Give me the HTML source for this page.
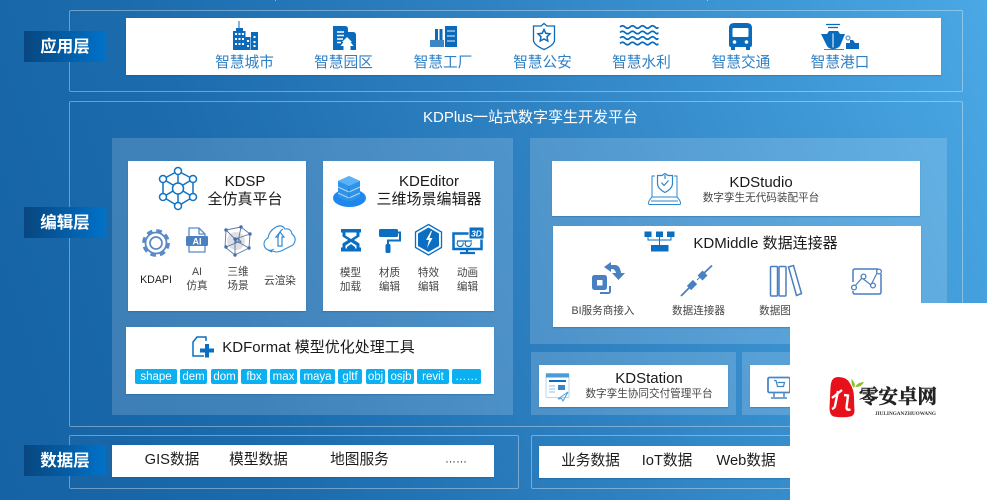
<!DOCTYPE html>
<html lang="zh">
<head>
<meta charset="utf-8">
<title>KDPlus</title>
<style>
html,body{margin:0;padding:0;width:987px;height:500px;overflow:hidden}
body{position:relative;background:linear-gradient(72deg,#1562a4 0%,#1b6bad 25%,#2f82c2 56%,#4aa8e4 100%);font-family:"Liberation Sans","Noto Sans CJK SC",sans-serif;color:#1a1a1a}
.b{position:absolute;box-sizing:border-box}
.f{border:1.5px solid rgba(255,255,255,.36);border-radius:2px}
.w{background:#fff;box-shadow:0 1px 1px rgba(20,80,140,.35)}
.p{background:rgba(255,255,255,.16)}
.l{background:linear-gradient(90deg,#08467f,#0072c9);color:#fff;font-weight:700;font-size:16.5px;line-height:33px;text-align:center}
.c{position:absolute;transform:translate(-50%,-50%);white-space:nowrap;line-height:1.2;margin-top:1.5px}
.a{color:#2f7fc4;font-size:14.7px}
.h{font-size:15px;color:#1a1a1a}
.s{font-size:10.6px;color:#444;text-align:center;line-height:14px;margin-top:1px}
.d{font-size:14.7px;color:#1c1c1c}
.pill{position:absolute;top:369px;height:15px;background:#0bb0f0;border-radius:2px;color:#fff;font-size:11.5px;line-height:16px;text-align:center}
svg{position:absolute;left:0;top:0}
</style>
</head>
<body>
<div class="b f" style="left:69px;top:10px;width:894px;height:82px"></div>
<div class="b f" style="left:69px;top:101px;width:894px;height:326px"></div>
<div class="b f" style="left:69px;top:435px;width:450px;height:54px"></div>
<div class="b f" style="left:531px;top:435px;width:432px;height:54px"></div>

<div class="b w" style="left:126px;top:18px;width:815px;height:57px"></div>
<div class="b l" style="left:24px;top:31px;width:82px;height:31px">应用层</div>
<div class="b l" style="left:24px;top:207px;width:82px;height:31px">编辑层</div>
<div class="b l" style="left:24px;top:445px;width:82px;height:31px">数据层</div>

<div class="c a" style="left:244.5px;top:62px">智慧城市</div>
<div class="c a" style="left:343.5px;top:62px">智慧园区</div>
<div class="c a" style="left:443px;top:62px">智慧工厂</div>
<div class="c a" style="left:542.5px;top:62px">智慧公安</div>
<div class="c a" style="left:641.5px;top:62px">智慧水利</div>
<div class="c a" style="left:741px;top:62px">智慧交通</div>
<div class="c a" style="left:840px;top:62px">智慧港口</div>

<div class="c" style="left:530.5px;top:116.5px;color:#fff;font-size:15px">KDPlus一站式数字孪生开发平台</div>

<div class="b p" style="left:112px;top:138px;width:401px;height:277px"></div>
<div class="b p" style="left:530px;top:138px;width:417px;height:206px"></div>
<div class="b p" style="left:531px;top:352px;width:205px;height:63px"></div>
<div class="b p" style="left:742px;top:352px;width:205px;height:63px"></div>

<div class="b w" style="left:128px;top:161px;width:178px;height:150px"></div>
<div class="b w" style="left:323px;top:161px;width:171px;height:150px"></div>
<div class="b w" style="left:126px;top:327px;width:368px;height:67px"></div>
<div class="b w" style="left:552px;top:161px;width:368px;height:55px"></div>
<div class="b w" style="left:553px;top:226px;width:368px;height:101px"></div>
<div class="b w" style="left:539px;top:365px;width:189px;height:42px"></div>
<div class="b w" style="left:750px;top:365px;width:189px;height:42px"></div>
<div class="b w" style="left:112px;top:445px;width:382px;height:32px"></div>
<div class="b w" style="left:539px;top:446px;width:400px;height:32px"></div>

<div class="c h" style="left:245px;top:180px">KDSP</div>
<div class="c h" style="left:245px;top:198px">全仿真平台</div>
<div class="c s" style="left:156px;top:279px;color:#222">KDAPI</div>
<div class="c s" style="left:197px;top:278px">AI<br>仿真</div>
<div class="c s" style="left:238px;top:278px">三维<br>场景</div>
<div class="c s" style="left:280px;top:280px">云渲染</div>

<div class="c h" style="left:429px;top:180px">KDEditor</div>
<div class="c h" style="left:429px;top:198px">三维场景编辑器</div>
<div class="c s" style="left:350.5px;top:278.5px">模型<br>加载</div>
<div class="c s" style="left:389.5px;top:278.5px">材质<br>编辑</div>
<div class="c s" style="left:428.5px;top:278.5px">特效<br>编辑</div>
<div class="c s" style="left:467.5px;top:278.5px">动画<br>编辑</div>

<div class="c h" style="left:318.5px;top:346.5px">KDFormat 模型优化处理工具</div>
<div class="pill" style="left:135px;width:42px">shape</div>
<div class="pill" style="left:180px;width:27px">dem</div>
<div class="pill" style="left:211px;width:27px">dom</div>
<div class="pill" style="left:241px;width:26px">fbx</div>
<div class="pill" style="left:270px;width:27px">max</div>
<div class="pill" style="left:300px;width:35px">maya</div>
<div class="pill" style="left:338px;width:24px">gltf</div>
<div class="pill" style="left:366px;width:19px">obj</div>
<div class="pill" style="left:388px;width:26px">osjb</div>
<div class="pill" style="left:417px;width:32px">revit</div>
<div class="pill" style="left:452px;width:29px">……</div>

<div class="c d" style="left:172px;top:459.5px">GIS数据</div>
<div class="c d" style="left:258.5px;top:459.5px">模型数据</div>
<div class="c d" style="left:359.5px;top:459.5px">地图服务</div>
<div class="c d" style="left:456px;top:458px;font-size:11px">……</div>
<div class="c d" style="left:590.5px;top:460.5px">业务数据</div>
<div class="c d" style="left:667px;top:460.5px">IoT数据</div>
<div class="c d" style="left:746px;top:460.5px">Web数据</div>

<div class="c h" style="left:761px;top:181.5px">KDStudio</div>
<div class="c s" style="left:761px;top:197px">数字孪生无代码装配平台</div>
<div class="c h" style="left:765.5px;top:242.5px">KDMiddle 数据连接器</div>
<div class="c s" style="left:603px;top:310px">BI服务商接入</div>
<div class="c s" style="left:698.5px;top:310px">数据连接器</div>
<div class="c s" style="left:775px;top:310px">数据图</div>
<div class="c h" style="left:649px;top:377.5px">KDStation</div>
<div class="c s" style="left:649px;top:393px">数字孪生协同交付管理平台</div>

<svg width="987" height="500" viewBox="0 0 987 500" fill="none">
<rect x="275" y="0" width="1" height="1" fill="#5fd0e0"/><rect x="707" y="0" width="1" height="1" fill="#7fd8f0"/>

<!-- city -->
<path d="M233 50V31h3v-3h2.500v-7h1v7H243v3h2.500v19zM245.500 50V37h5v13zM251 50V32h7v18z" fill="#0a6bbd"/>
<g fill="#fff"><rect x="235" y="33" width="2" height="2"/><rect x="238.500" y="33" width="2" height="2"/><rect x="242" y="33" width="2" height="2"/><rect x="235" y="38" width="2" height="2"/><rect x="238.500" y="38" width="2" height="2"/><rect x="242" y="38" width="2" height="2"/><rect x="235" y="43" width="2" height="2"/><rect x="238.500" y="43" width="2" height="2"/><rect x="242" y="43" width="2" height="2"/><rect x="247" y="40" width="2" height="2"/><rect x="247" y="45" width="2" height="2"/><rect x="253.500" y="36" width="2" height="2"/><rect x="253.500" y="41" width="2" height="2"/><rect x="253.500" y="45" width="2" height="2"/></g>
<!-- park -->
<path d="M333 50V26h12q3 0 3 3v3h5q3 0 3 3v15z" fill="#0a6bbd"/>
<path d="M337 32h7M337 35.500h7M337 39h6M337 42.500h4" stroke="#fff" stroke-width="1.500"/>
<path d="M347 37l5 5h-1.500l3 4h-3v4h-7v-4h-3l3-4h-1.500z" fill="#fff"/>
<!-- factory -->
<rect x="435" y="29" width="3" height="11" fill="#0a6bbd"/><rect x="439.500" y="29" width="3" height="11" fill="#0a6bbd"/>
<path d="M445 26h12v21h-12z" fill="#0a6bbd"/>
<path d="M430 40h14v7h-14z" fill="#3d86c6"/>
<path d="M447 31h8M447 36h8M447 41h8" stroke="#9cc4e6" stroke-width="1.500"/>
<!-- shield -->
<path d="M544 23.500l3 2.500h7.500v14q0 5-10.500 9.500Q533.500 45 533.500 40V26H541z" stroke="#0a6bbd" stroke-width="1.300"/>
<path d="M544 29.500l1.800 3.800 4.200.5-3 3 .8 4.200-3.800-2-3.800 2 .8-4.200-3-3 4.200-.5z" stroke="#0a6bbd" stroke-width="1.500"/>
<!-- water -->
<g stroke="#0a6bbd" stroke-width="1.700">
<path d="M620 27q2.500-2.500 5 0t5 0 5 0 5 0 5 0 5 0 5 0 3 0"/>
<path d="M620 32.500q2.500-2.500 5 0t5 0 5 0 5 0 5 0 5 0 5 0 3 0"/>
<path d="M620 38q2.500-2.500 5 0t5 0 5 0 5 0 5 0 5 0 5 0 3 0"/>
<path d="M620 43.500q2.500-2.500 5 0t5 0 5 0 5 0 5 0 5 0 5 0 3 0"/>
</g>
<!-- bus -->
<path d="M729 28q0-5 5-5h13q5 0 5 5v17q0 2-2 2v3h-4v-3h-11v3h-4v-3q-2 0-2-2z" fill="#0a6bbd"/>
<rect x="732.500" y="28" width="16" height="9" rx="1" fill="#fff"/>
<circle cx="734.500" cy="42" r="1.800" fill="#fff"/><circle cx="746.500" cy="42" r="1.800" fill="#fff"/>
<!-- ship -->
<path d="M826 24.500h14M828 27.500h10" stroke="#0a6bbd" stroke-width="1.300"/>
<path d="M829 31h9l2 3h5l-5 12q-3 3-7 3t-6-3l-6-12h6z" fill="#0a6bbd"/>
<path d="M833 33.500v14" stroke="#fff" stroke-width="1"/>
<path d="M846 48v-5h4v-3h3l2 3h4v6h-13z" fill="#0a6bbd"/>
<circle cx="848" cy="38" r="2" stroke="#3d86c6" stroke-width="1"/>
<path d="M824 49.500h20" stroke="#3d86c6" stroke-width="1"/>

<!-- KDSP graph -->
<g stroke="#0f72c4" stroke-width="1.500" fill="#fff">
<path d="M178 171v35M163 179l30 18M193 179l-30 18M163 179v18M193 179v18M178 171l-15 8M178 171l15 8M178 206l-15-9M178 206l15-9"/>
<circle cx="178" cy="188.500" r="5.500"/>
<circle cx="178" cy="171" r="3.500"/><circle cx="163" cy="179" r="3.500"/><circle cx="193" cy="179" r="3.500"/><circle cx="163" cy="197" r="3.500"/><circle cx="193" cy="197" r="3.500"/><circle cx="178" cy="206" r="3.500"/>
</g>
<!-- gear -->
<g stroke="#5a8ac6">
<circle cx="156" cy="243" r="10.500" stroke-width="1.800"/>
<circle cx="156" cy="243" r="12.300" stroke-width="3.200" stroke-dasharray="5.600 4.050"/>
<circle cx="156" cy="243" r="6" stroke-width="1.700"/>
</g>
<!-- AI doc -->
<path d="M189 237v-9h10l6 6v3M189 246v6h16v-6M199 228v6h6" stroke="#5a8ac6" stroke-width="1.300"/>
<rect x="186" y="236" width="22" height="10" rx="1.500" fill="#4a7fc1"/>
<text x="197" y="244.300" text-anchor="middle" fill="#fff" font-size="9" font-weight="700" font-family="Liberation Sans,sans-serif">AI</text>
<!-- cube -->
<circle cx="236" cy="241" r="9" fill="#e0e0e0"/>
<path d="M226 230l15-3 9 7-1 14-14 7-10-8zM226 230l9 9v16M235 239l15-5M241 227l-3 15-12 5M238 242l11 6" stroke="#5a78a8" stroke-width=".9"/>
<g fill="#4a6fa8"><circle cx="226" cy="230" r="1.700"/><circle cx="241" cy="227" r="1.700"/><circle cx="250" cy="234" r="1.700"/><circle cx="235" cy="239" r="1.700"/><circle cx="226" cy="247" r="1.700"/><circle cx="235" cy="255" r="1.700"/><circle cx="249" cy="248" r="1.700"/></g>
<path d="M235 242l3-4 3 4z" stroke="#4a6fa8" stroke-width="1"/>
<!-- cloud -->
<path d="M268 250q-4-2-4-6 0-4 4-6 1-7 8-11 6-3 9 2 6-1 7 5 4 3 3 7-1 4-4 5l-10 5q-3 1-5 1z" stroke="#2f8bd6" stroke-width="1.100"/>
<path d="M272 252l-4-2q3 1 6-1 M283 229q-4 2-5 9" stroke="#2f8bd6" stroke-width="1"/>
<path d="M280 232l4 5h-2v9h-4v-9h-2z" stroke="#2f8bd6" stroke-width="1.200"/>

<!-- KDEditor stack -->
<ellipse cx="349.500" cy="198" rx="16.500" ry="9" fill="#1e87ee"/>
<path d="M349 176l11 5v16l-11 5-11-5v-16z" fill="#2f93ea"/>
<path d="M338 181l11 5 11-5-11-5z" fill="#5cb2f6"/>
<path d="M338 187l11 5 11-5M338 193l11 5 11-5" stroke="#cfe7fb" stroke-width=".9"/>
<path d="M349 186v16" stroke="#1a78d0" stroke-width=".6"/>
<!-- hourglass -->
<path d="M341 229h20v3.500h-1.500v4l-5.500 3.500 5.500 3.500v4h1.500v4h-20v-4h1.500v-4l5.500-3.500-5.500-3.500v-4H341z" fill="#0a6fc2"/>
<path d="M345.500 232.500h11v3l-5.500 3.500-5.500-3.500zM351 242l5.500 3.500v3h-11v-3z" fill="#fff"/>
<path d="M347 247l4-3 4 3v1.500h-8z" fill="#0a6fc2"/>
<!-- roller -->
<rect x="379" y="229" width="19" height="8" rx="1.500" fill="#0a6fc2"/>
<path d="M398 232.500h2v8h-12v4" stroke="#0a6fc2" stroke-width="2"/>
<rect x="385.500" y="244" width="5" height="9" rx="1.500" fill="#0a6fc2"/>
<!-- hex -->
<path d="M428.500 224.500l13 7.500v15.500l-13 7.500-13-7.500V232z" stroke="#0a6fc2" stroke-width="1.300"/>
<path d="M428.500 227.500l10.500 6v12.500l-10.500 6-10.500-6v-12.500z" fill="#0a6fc2"/>
<path d="M431 231l-5 9h3l-2 8 5.500-10h-3l2.500-7z" fill="#fff"/>
<!-- monitor 3D -->
<rect x="453.500" y="233.500" width="28" height="15.500" stroke="#0a6fc2" stroke-width="2.500"/>
<path d="M467 249v3M460 253h15" stroke="#0a6fc2" stroke-width="2.200"/>
<rect x="469" y="227" width="15" height="12" rx="1" fill="#0a6fc2" stroke="#fff" stroke-width="1"/>
<text x="476.500" y="236.500" text-anchor="middle" fill="#fff" font-size="8.500" font-weight="700" font-style="italic" font-family="Liberation Sans,sans-serif">3D</text>
<path d="M457 241h15M458 241.500a3 3 0 1 0 5 1M466 241.500a3 3 0 1 0 5 1" stroke="#0a6fc2" stroke-width="1.200"/>

<!-- KDFormat icon -->
<path d="M206 341v-4h-9l-4 5v14h11" stroke="#0a6fc2" stroke-width="1.500"/>
<path d="M205 344h4v4.500h5v4h-5v5h-4v-5h-5v-4h5z" fill="#0a6fc2"/>

<!-- laptop -->
<g stroke="#2f86cc" stroke-width="1">
<path d="M652 197v-21h3M677 197v-21h-3M652 197h25"/>
<path d="M648.500 204q-.5-3 3.500-7M680.500 204q.5-3-3.500-7M648.500 204.500h32M651 201h27"/>
<path d="M665 173.500l3 2h4.500v8q0 5-7.500 9-7.500-4-7.500-9v-8h4.500z" stroke-width="1.200"/>
<path d="M661.500 182.500l2.500 3 4.500-5M665 175v4" stroke-width="1.200"/>
</g>
<!-- hierarchy -->
<g fill="#0a6fc2">
<rect x="644.500" y="231.500" width="7" height="5.500"/><rect x="656" y="231.500" width="7" height="5.500"/><rect x="667" y="231.500" width="7.500" height="5.500"/>
<rect x="651" y="245" width="17.500" height="6.500"/>
</g>
<path d="M648 237v3h23v-3M659.500 237v8" stroke="#0a6fc2" stroke-width="1"/>

<!-- BI -->
<rect x="592" y="275" width="15" height="15" rx="2.500" fill="#4a7fc1"/>
<rect x="597" y="280" width="5.500" height="5.500" fill="#fff"/>
<path d="M610 286v5.500a1.500 1.500 0 0 1-1.500 1.500H600" stroke="#4a7fc1" stroke-width="2"/>
<path d="M604 267l7-5v3h4q5 0 6 8h4l-6.500 7-6.500-7h4q-1-4-4-4h-1v3z" fill="#4a7fc1"/>
<!-- connector -->
<g stroke="#4a7fc1">
<path d="M681 296l10-10M702 275l10-9.500" stroke-width="1.800"/>
<path d="M689 288l6-6" stroke-width="6"/>
<path d="M697 280l5-5" stroke-width="1"/>
<path d="M700 278l5-5" stroke-width="7"/>
</g>
<!-- books -->
<g stroke="#4a7fc1" stroke-width="1.500">
<rect x="770.500" y="266.500" width="7" height="29.500" rx="1"/>
<rect x="779" y="266.500" width="7" height="29.500" rx="1"/>
<path d="M788.500 267l5-1.500 8 28-5 2z"/>
</g>
<!-- chart -->
<path d="M878 269h-23q-2 0-2 2v11M853 291v1q0 2 2 2h24q2 0 2-2v-18" stroke="#4a7fc1" stroke-width="1.500"/>
<path d="M855 286l7-8 9 7 7-14" stroke="#4a7fc1" stroke-width="1.200"/>
<g stroke="#4a7fc1" stroke-width="1.300" fill="#fff"><circle cx="854" cy="287.500" r="2.400"/><circle cx="863.500" cy="276.500" r="2.400"/><circle cx="873" cy="285.500" r="2.400"/><circle cx="879" cy="271.500" r="2.400"/></g>

<!-- station -->
<rect x="546" y="373.500" width="23" height="24" rx="1" stroke="#b5d6ee" stroke-width="1"/>
<rect x="546" y="373.500" width="23" height="4" fill="#4a9bd8"/>
<rect x="549" y="380" width="17" height="2" fill="#0a6fc2"/>
<rect x="558" y="385" width="7" height="5" fill="#3d86c6"/>
<path d="M549 386h6M549 389h6M549 392h6" stroke="#8fbfe4" stroke-width="1"/>
<path d="M558 399l10-7-5 9-1.500-2.500z" stroke="#4a9bd8" stroke-width="1"/>
<!-- cart monitor -->
<rect x="768" y="377.500" width="22" height="15" rx="1.500" stroke="#4a86c6" stroke-width="1.800"/>
<path d="M774 393v4M784 393v4M771 398h16" stroke="#4a86c6" stroke-width="1.500"/>
<path d="M774 380.500h2l1.500 6h6l1-4h-7" stroke="#3d86c6" stroke-width="1.200"/>
</svg>

<!-- watermark -->
<div class="b" style="left:790px;top:303px;width:197px;height:197px;background:#fff"></div>
<svg width="987" height="500" viewBox="0 0 987 500" fill="none">
<path d="M838 377q-7 0-7.500 10-.5 10-1 21 0 7 4 8.500 10 1.500 17 0 4-1 4-6-.5-7-.5-13 0-8-4-14-3-6.500-12-6.500z" fill="#e8101a"/>
<path d="M832 398l10-8M838 391l-3 15q-.5 2-3 3M844 395l4 .5-1.500 12q0 3 4 2" stroke="#fff" stroke-width="2.400"/>
<path d="M854 388q-3-3-2.500-9 3 3 3.500 6zM855 387q3-5 9-5-2 5-9 5z" fill="#8cc21f"/>
<text x="859" y="403" font-size="19.500" font-weight="700" fill="#222" stroke="#222" stroke-width=".5" font-family="Noto Serif CJK SC,serif" textLength="78" lengthAdjust="spacingAndGlyphs">零安卓网</text>
<text x="875" y="415" font-size="5" font-weight="700" fill="#333" font-family="Liberation Serif,serif" textLength="61" lengthAdjust="spacingAndGlyphs">JIULINGANZHUOWANG</text>
</svg>
</body>
</html>
